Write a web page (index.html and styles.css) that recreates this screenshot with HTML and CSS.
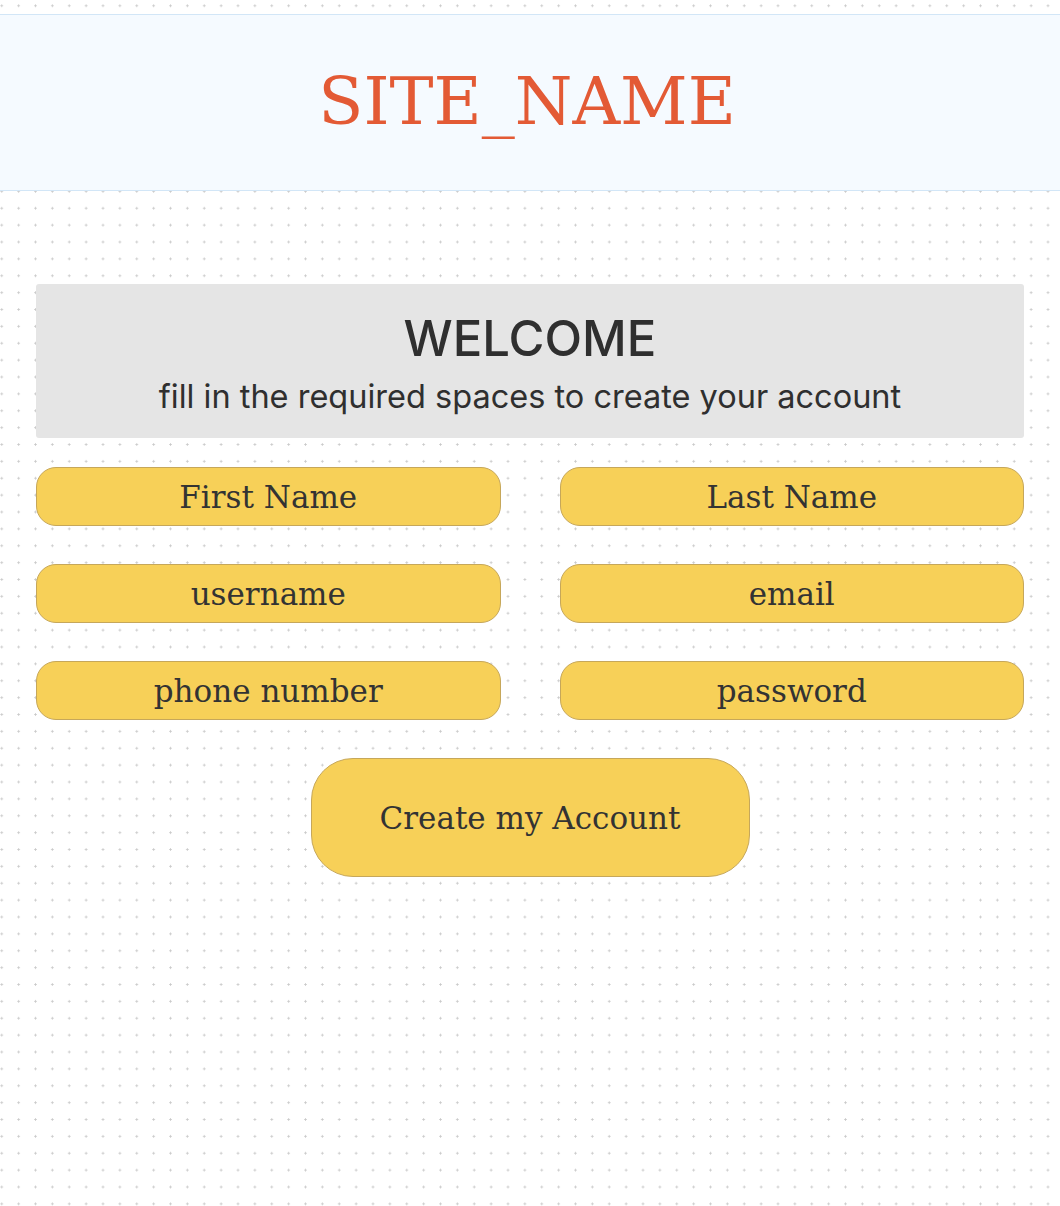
FILE: index.html
```html
<!DOCTYPE html>
<html lang="en">
<head>
<meta charset="utf-8">
<title>Create account</title>
<link rel="stylesheet" href="styles.css">
</head>
<body>
<header class="site-header">
  <h1 class="site-title">SITE_NAME</h1>
</header>
<main class="content">
  <section class="welcome">
    <h2 class="welcome-title">WELCOME</h2>
    <p class="welcome-sub">fill in the required spaces to create your account</p>
  </section>
  <form class="signup">
    <div class="fields">
      <div class="field">First Name</div>
      <div class="field">Last Name</div>
      <div class="field">username</div>
      <div class="field">email</div>
      <div class="field">phone number</div>
      <div class="field">password</div>
    </div>
    <div class="actions">
      <div class="submit">Create my Account</div>
    </div>
  </form>
</main>
</body>
</html>
```
FILE: styles.css
```css
html, body {
  margin: 0;
  padding: 0;
}
body {
  min-height: 1206px;
  background-color: #ffffff;
  background-image: radial-gradient(circle, #c9c9c9 0.9px, rgba(255,255,255,0) 1.3px);
  background-size: 16.88px 16.88px;
  background-position: -6.7px -2.7px;
  font-family: "DejaVu Serif", "Liberation Serif", serif;
  color: #333333;
}
.site-header {
  margin-top: 14px;
  height: 175px;
  background: #f5faff;
  border-top: 1px solid #d2e6f7;
  border-bottom: 1px solid #d2e6f7;
  display: flex;
  align-items: center;
  justify-content: center;
}
.site-title {
  margin: 0 0 2px -6px;
  font-family: "DejaVu Serif", serif;
  font-weight: normal;
  font-size: 66px;
  color: #e35a35;
}
.content {
  width: 988px;
  margin: 93px auto 0;
}
.welcome {
  height: 154px;
  box-sizing: border-box;
  background: #e5e5e5;
  border-radius: 3px;
  display: flex;
  flex-direction: column;
  align-items: center;
  padding-top: 26px;
  font-family: Inter, "Noto Sans", sans-serif;
  color: #2f2f2f;
}
.welcome-title {
  margin: 0;
  font-weight: 500;
  font-size: 49px;
  line-height: 58px;
}
.welcome-sub {
  margin: 9px 0 0;
  font-size: 32.5px;
  line-height: 40px;
}
.signup {
  margin-top: 29px;
}
.fields {
  display: grid;
  grid-template-columns: 1fr 1fr;
  column-gap: 59px;
  row-gap: 38px;
}
.field {
  height: 59px;
  box-sizing: border-box;
  background: #f7d058;
  border: 1.5px solid #c6a75a;
  border-radius: 20px;
  display: flex;
  align-items: center;
  justify-content: center;
  font-size: 31px;
  color: #333333;
}
.actions {
  display: flex;
  justify-content: center;
  margin-top: 38px;
}
.submit {
  width: 439px;
  height: 119px;
  box-sizing: border-box;
  background: #f7d058;
  border: 1.5px solid #c6a75a;
  border-radius: 42px;
  display: flex;
  align-items: center;
  justify-content: center;
  font-size: 31px;
  color: #333333;
}
```
